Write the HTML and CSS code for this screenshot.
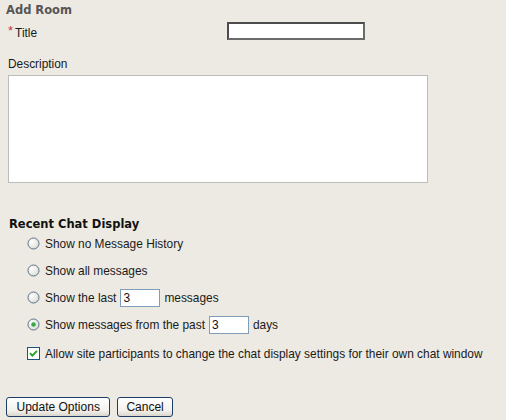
FILE: index.html
```html
<!DOCTYPE html>
<html>
<head>
<meta charset="utf-8">
<link rel="stylesheet" href="styles.css">
</head>
<body>
<form class="page">
  <h2 class="title">Add Room</h2>
  <div class="title-row">
    <label class="lbl"><span class="req">*</span>Title</label>
    <input class="title-input" type="text">
  </div>
  <label class="lbl desc-lbl">Description</label>
  <textarea class="desc"></textarea>

  <h3 class="section">Recent Chat Display</h3>
  <div class="options">
    <div class="opt">
      <svg class="radio" width="13" height="13" viewBox="0 0 13 13"><defs><radialGradient id="rg" cx="0.35" cy="0.35" r="0.8"><stop offset="0" stop-color="#ffffff"/><stop offset="1" stop-color="#d8d8d0"/></radialGradient></defs><circle cx="6.5" cy="6.5" r="5.5" fill="url(#rg)" stroke="#5e7289" stroke-width="1"/></svg>
      <span>Show no Message History</span>
    </div>
    <div class="opt">
      <svg class="radio" width="13" height="13" viewBox="0 0 13 13"><circle cx="6.5" cy="6.5" r="5.5" fill="url(#rg)" stroke="#5e7289" stroke-width="1"/></svg>
      <span>Show all messages</span>
    </div>
    <div class="opt">
      <svg class="radio" width="13" height="13" viewBox="0 0 13 13"><circle cx="6.5" cy="6.5" r="5.5" fill="url(#rg)" stroke="#5e7289" stroke-width="1"/></svg>
      <span>Show the last</span><input class="num" type="text" value="3"><span>messages</span>
    </div>
    <div class="opt">
      <svg class="radio" width="13" height="13" viewBox="0 0 13 13"><circle cx="6.5" cy="6.5" r="5.5" fill="url(#rg)" stroke="#5e7289" stroke-width="1"/><circle cx="6.5" cy="6.5" r="2.3" fill="#3aa64a"/></svg>
      <span>Show messages from the past</span><input class="num" type="text" value="3"><span>days</span>
    </div>
    <div class="opt check-opt">
      <svg class="check" width="13" height="13" viewBox="0 0 13 13"><rect x="0.5" y="0.5" width="12" height="12" fill="#ffffff" stroke="#1c5180"/><path d="M3 6.2 L5.3 8.6 L10 3.8" fill="none" stroke="#21a121" stroke-width="1.8"/></svg>
      <span>Allow site participants to change the chat display settings for their own chat window</span>
    </div>
  </div>

  <div class="buttons">
    <button type="button" class="btn btn-update">Update Options</button>
    <button type="button" class="btn">Cancel</button>
  </div>
</form>
</body>
</html>
```
FILE: styles.css
```css
html, body {
  margin: 0;
  padding: 0;
  background: #edeae3;
}
body {
  font-family: "Liberation Sans", Arial, sans-serif;
  font-size: 11.9px;
  color: #1a1a1a;
}
.page {
  display: flex;
  flex-direction: column;
  align-items: flex-start;
  padding: 3px 0 0 0;
}
.title {
  font-family: "DejaVu Sans", Verdana, sans-serif;
  font-size: 11.5px;
  font-weight: bold;
  color: #555555;
  margin: 0 0 0 6px;
  line-height: 15px;
}
.title-row {
  display: grid;
  grid-template-columns: 219px auto;
  align-items: end;
  padding-left: 8px;
  margin-top: 4px;
}
.lbl {
  line-height: 14px;
}
.req {
  color: #c0383f;
  font-size: 13px;
  margin-right: 2px;
  vertical-align: 2px;
}
.title-input {
  width: 130px;
  height: 14px;
  border: 2px solid #4c4c4c;
  border-right-color: #6a6a6a;
  border-bottom-color: #6a6a6a;
  padding: 0 2px;
  margin: 0;
  background: #ffffff;
  font: inherit;
}
.desc-lbl {
  margin: 17px 0 0 8px;
}
.desc {
  display: block;
  margin: 4px 0 0 8px;
  width: 418px;
  height: 106px;
  border: 1px solid #bcbcbc;
  background: #ffffff;
  padding: 0;
  resize: none;
}
.section {
  font-family: "DejaVu Sans", Verdana, sans-serif;
  font-size: 11.5px;
  font-weight: bold;
  color: #111111;
  margin: 34px 0 0 9px;
  line-height: 14px;
}
.options {
  display: flex;
  flex-direction: column;
  padding-left: 27px;
  margin-top: -1px;
}
.opt {
  display: flex;
  align-items: center;
  height: 27px;
}
.opt .radio, .opt .check {
  flex: none;
  margin-right: 5px;
}
.opt .num {
  width: 34px;
  height: 16px;
  border: 1px solid #7f9db9;
  background: #ffffff;
  margin: 0 4px;
  padding: 0 2px;
  font: inherit;
  color: #111;
}
.check-opt {
  margin-top: 2px;
}
.buttons {
  display: flex;
  gap: 7px;
  margin: 30px 0 0 6px;
}
.btn {
  font-family: "Liberation Sans", Arial, sans-serif;
  font-size: 12px;
  color: #111;
  height: 20px;
  padding: 0 8px;
  border: 1px solid #1f3e64;
  border-radius: 3px;
  background: linear-gradient(#ffffff, #f2f1ec 70%, #d9d6cb);
}
.btn-update {
  padding: 0 9.5px;
}
```
